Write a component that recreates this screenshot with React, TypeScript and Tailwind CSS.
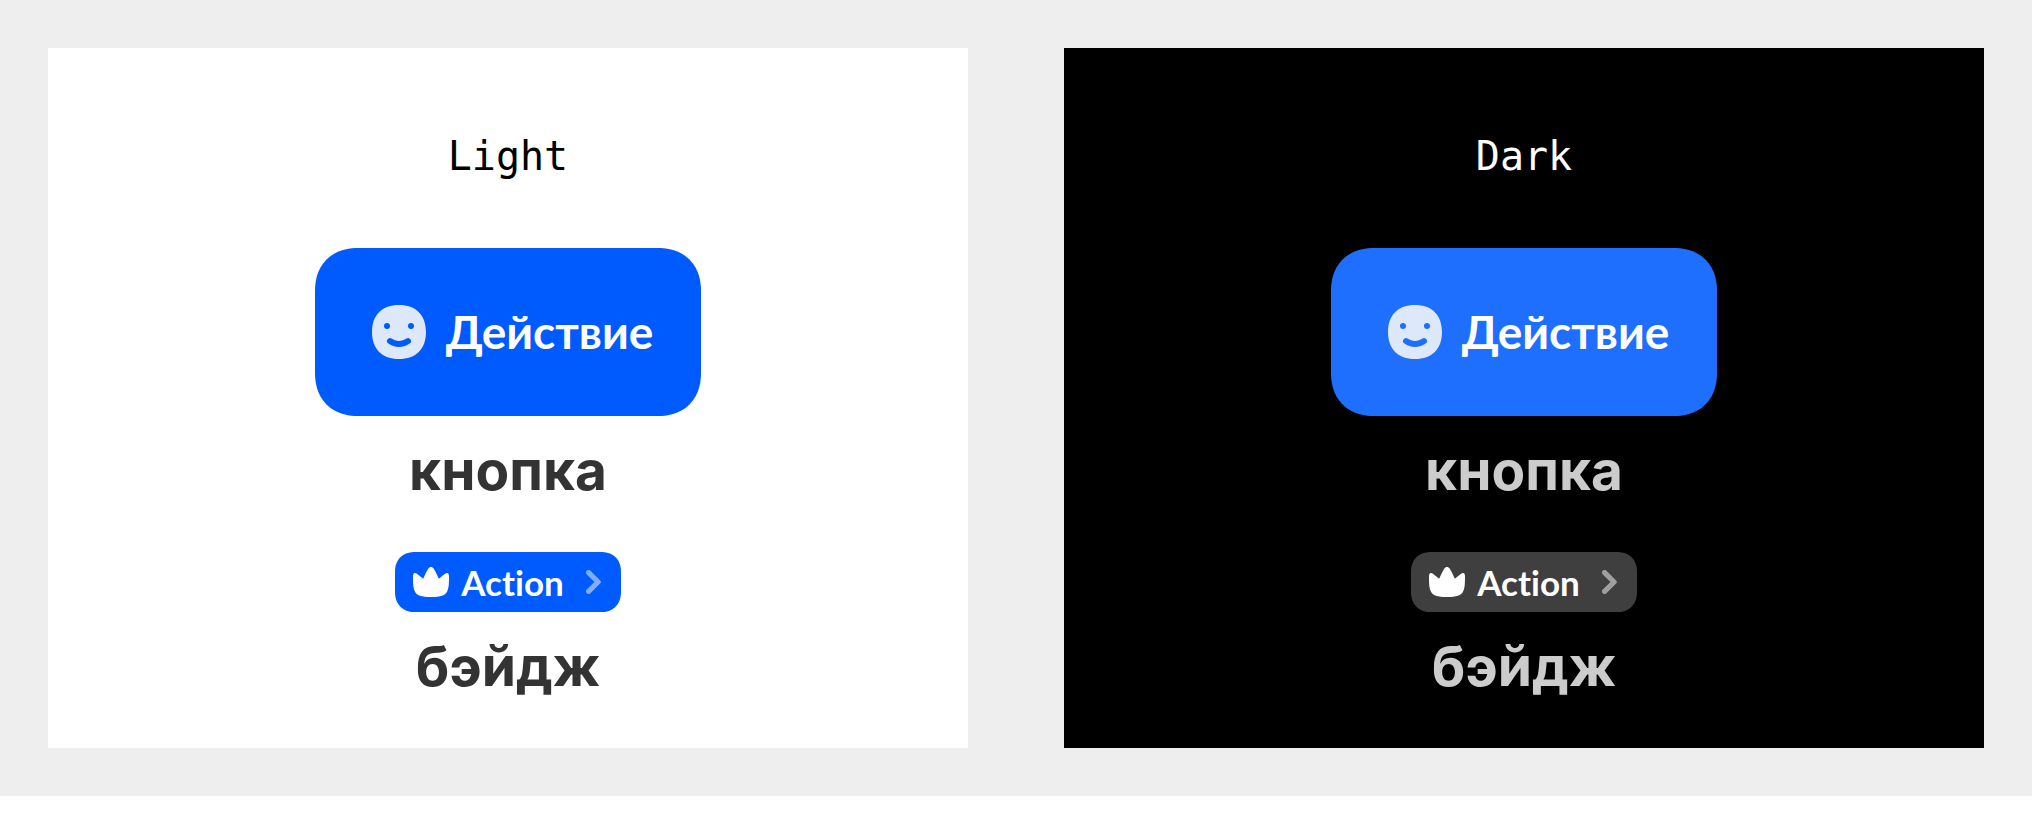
import React from "react";

type Theme = {
  title: string;
  panel: string;
  button: string;
  badge: string;
  caption: string;
};

const themes: Theme[] = [
  {
    title: "Light",
    panel: "bg-white text-black",
    button: "bg-[#005bff]",
    badge: "bg-[#005bff]",
    caption: "text-[#333333]",
  },
  {
    title: "Dark",
    panel: "bg-black text-white",
    button: "bg-[#1f6fff]",
    badge: "bg-[#3f3f3f]",
    caption: "text-[#cccccc]",
  },
];

function SmileIcon() {
  return (
    <svg className="size-[54px] shrink-0 text-[#dde8fa]" viewBox="0 0 54 54" fill="none" aria-hidden="true">
      <path
        fill="currentColor"
        fillRule="evenodd"
        d="M27 0C44 0 54 10 54 27S44 54 27 54 0 44 0 27 10 0 27 0ZM15 18a3 3 0 1 0 0 6 3 3 0 0 0 0-6Zm24 0a3 3 0 1 0 0 6 3 3 0 0 0 0-6ZM19.6 33.500a3 3 0 0 0-3.200 5.100C19.600 40.800 23 42 27 42s7.400-1.200 10.600-3.400a3 3 0 0 0-3.200-5.100C32.200 35.100 29.800 36 27 36s-5.200-.900-7.400-2.500Z"
      />
    </svg>
  );
}

function CrownIcon() {
  return (
    <svg className="h-[30px] w-9 shrink-0" viewBox="0 0 36 30" fill="currentColor" aria-hidden="true">
      <path d="M0 9.500C0 6.200 1.200 5 3.600 6.600L10.200 11.700C12.300 7 13.700 3.900 15.400 1.500 16.900-.500 19.100-.500 20.600 1.500 22.300 3.900 23.700 7 25.800 11.700L32.400 6.600C34.800 5 36 6.200 36 9.500 36 16.500 35.800 20.800 34.200 24.300 32.300 28.700 27.800 30 18 30S3.700 28.700 1.800 24.300C.2 20.800 0 16.500 0 9.500Z" />
    </svg>
  );
}

function ChevronIcon() {
  return (
    <svg className="h-6 w-[15px] shrink-0 opacity-50" viewBox="0 0 15 24" fill="none" aria-hidden="true">
      <path d="M2.600 2.600 12.100 12 2.600 21.400" stroke="currentColor" strokeWidth="5.200" strokeLinecap="round" strokeLinejoin="round" />
    </svg>
  );
}

function Caption({ className, children }: { className: string; children: React.ReactNode }) {
  return <p className={`font-['Inter',sans-serif] text-[55px] leading-[60px] font-bold ${className}`}>{children}</p>;
}

function Panel({ theme }: { theme: Theme }) {
  return (
    <section className={`flex flex-1 flex-col items-center pt-20 pb-[52px] ${theme.panel}`}>
      <h2 className="font-['DejaVu_Sans_Mono',monospace] text-[40px] leading-[56px]">{theme.title}</h2>
      <button
        type="button"
        className={`mt-16 flex h-[168px] items-center gap-5 rounded-[43px] pr-12 pl-[57px] text-white [corner-shape:superellipse(1.15)] ${theme.button}`}
      >
        <SmileIcon />
        <span className="font-['Lato',sans-serif] text-[46px] leading-[60px] font-bold">Действие</span>
      </button>
      <Caption className={`mt-6 ${theme.caption}`}>кнопка</Caption>
      <a
        href="#action"
        className={`mt-[52px] flex h-[60px] items-center gap-3 rounded-[20px] pr-5 pl-[18px] text-white [corner-shape:superellipse(1.15)] ${theme.badge}`}
      >
        <CrownIcon />
        <span className="mr-2.5 font-['Lato',sans-serif] text-[35px] leading-[44px] font-bold [font-variant-ligatures:none]">Action</span>
        <ChevronIcon />
      </a>
      <Caption className={`mt-6 ${theme.caption}`}>бэйдж</Caption>
    </section>
  );
}

export default function App() {
  return (
    <div className="min-h-screen bg-white">
      <main className="flex gap-24 bg-[#eeeeee] p-12">
        {themes.map((theme) => (
          <Panel key={theme.title} theme={theme} />
        ))}
      </main>
    </div>
  );
}
